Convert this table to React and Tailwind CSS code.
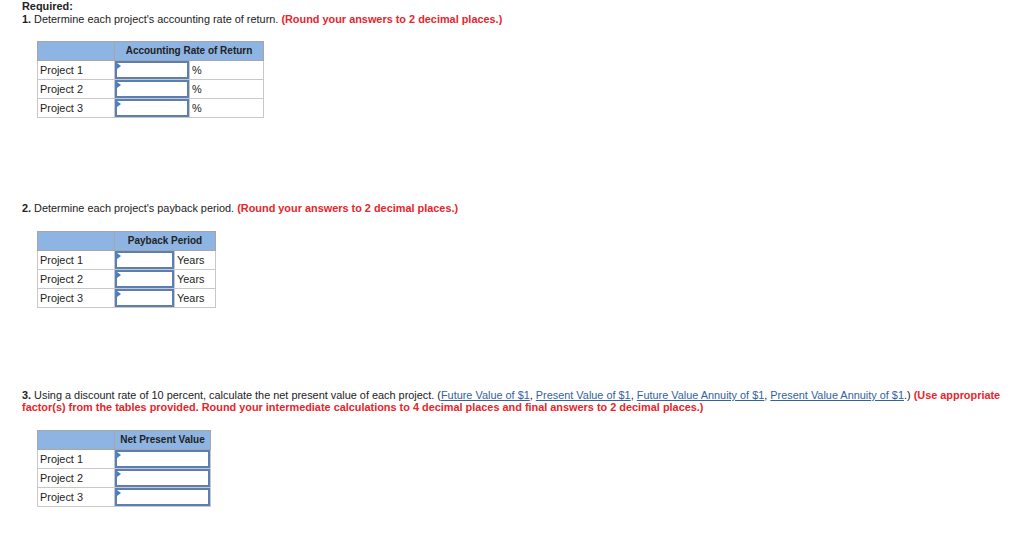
import React from 'react';

const rows = ['Project 1', 'Project 2', 'Project 3'];

// little blue marker in the corner of each answer box
const AnswerBox = ({ width }) => (
  <div className={`relative h-[18px] border-2 border-[#5b7fb3] bg-white ${width}`}>
    <span className="absolute left-0 top-0 h-0 w-0 border-y-[3px] border-l-[4px] border-y-transparent border-l-[#3f7fd0]" />
  </div>
);

const AnswerTable = ({ title, inputW, unit, unitW }) => (
  <table className="border-collapse text-[10.9px] leading-[12px] text-[#222]">
    <thead>
      <tr className="h-[19px] bg-[#8eb4e3]">
        <th className="w-[77px] border border-[#a6a6a6] p-0" />
        <th
          colSpan={unit ? 2 : 1}
          className="border border-[#a6a6a6] px-1 py-0 text-center text-[10px] font-bold text-[#222]"
        >
          {title}
        </th>
      </tr>
    </thead>
    <tbody>
      {rows.map((r) => (
        <tr key={r} className="h-[19px]">
          <td className="w-[77px] border border-[#c8c8c8] py-0 pl-[2px] align-middle">{r}</td>
          <td className={`border border-[#c8c8c8] p-0 ${inputW}`}>
            <AnswerBox width={inputW} />
          </td>
          {unit && (
            <td className={`border border-[#c8c8c8] py-0 pl-[2px] ${unitW}`}>{unit}</td>
          )}
        </tr>
      ))}
    </tbody>
  </table>
);

const Red = ({ children }) => <span className="font-bold text-[#e8252b]">{children}</span>;

const Link = ({ children }) => (
  <span className="text-[#33629e] underline">{children}</span>
);

export default function App() {
  return (
    <div
      className="h-[548px] w-[1024px] bg-white pl-[22px] text-[10.9px] leading-[13px] text-[#222]"
      style={{ fontFamily: '"Liberation Sans", Arial, sans-serif' }}
    >
      <p className="font-bold">Required:</p>
      <p>
        <b>1.</b> Determine each project's accounting rate of return.{' '}
        <Red>(Round your answers to 2 decimal places.)</Red>
      </p>

      <div className="ml-[15px] mt-[15px]">
        <AnswerTable title="Accounting Rate of Return" inputW="w-[74px]" unit="%" unitW="w-[74px]" />
      </div>

      <p className="mt-[84px]">
        <b>2.</b> Determine each project's payback period.{' '}
        <Red>(Round your answers to 2 decimal places.)</Red>
      </p>

      <div className="ml-[15px] mt-[16px]">
        <AnswerTable title="Payback Period" inputW="w-[59px]" unit="Years" unitW="w-[41px]" />
      </div>

      <p className="mt-[81px] leading-[12px]">
        <b>3.</b> Using a discount rate of 10 percent, calculate the net present value of each project. (
        <Link>Future Value of $1</Link>, <Link>Present Value of $1</Link>,{' '}
        <Link>Future Value Annuity of $1</Link>, <Link>Present Value Annuity of $1</Link>.){' '}
        <Red>
          (Use appropriate factor(s) from the tables provided. Round your intermediate calculations to 4
          decimal places and final answers to 2 decimal places.)
        </Red>
      </p>

      <div className="ml-[15px] mt-[17px]">
        <AnswerTable title="Net Present Value" inputW="w-[95px]" />
      </div>
    </div>
  );
}
